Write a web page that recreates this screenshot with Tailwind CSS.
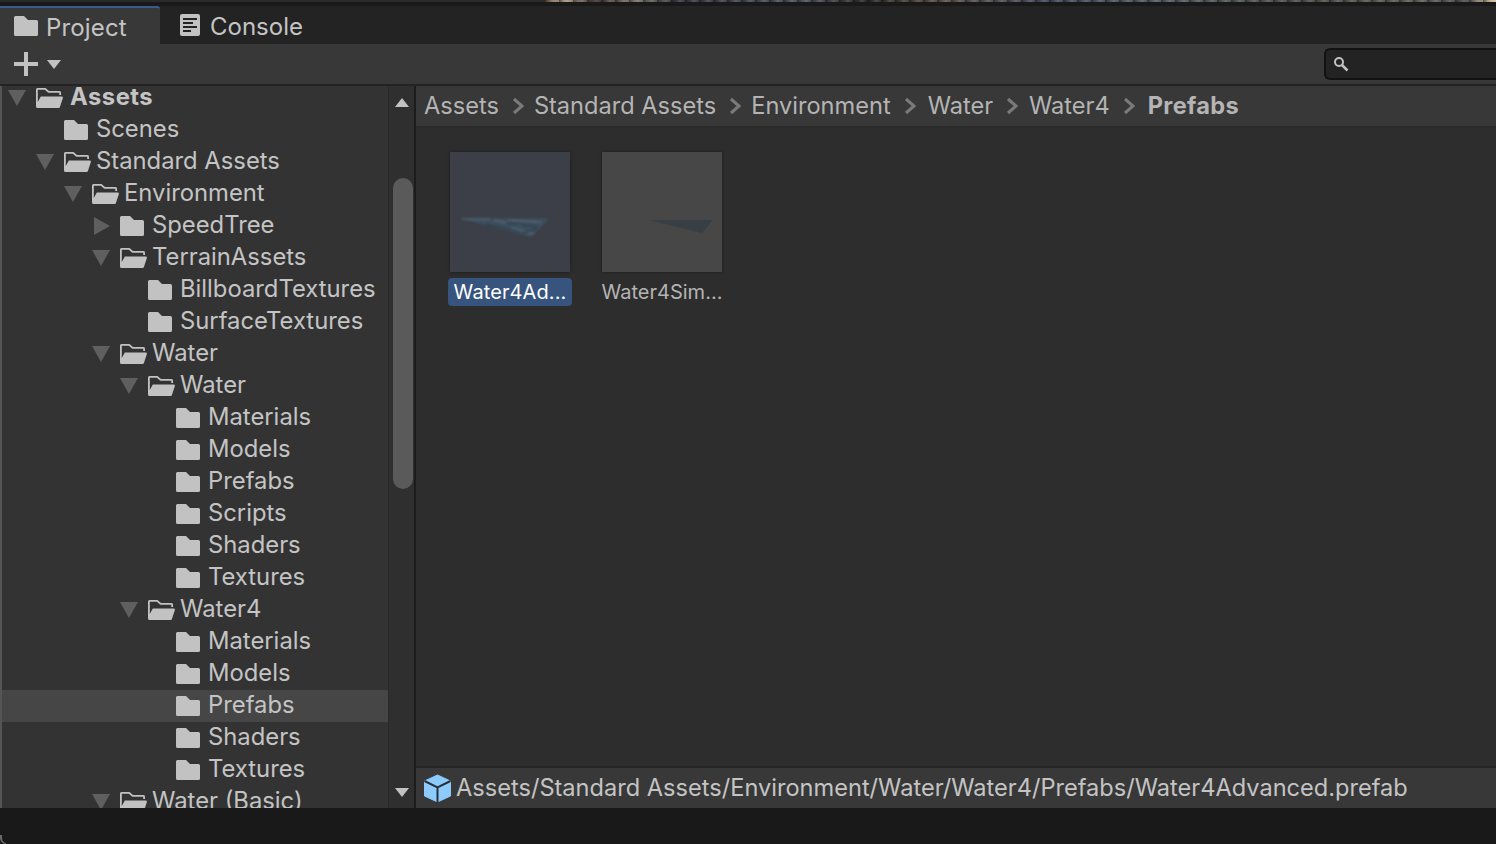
<!DOCTYPE html>
<html lang="en">
<head>
    <meta charset="UTF-8">
    <title>Project</title>
    <script src="https://cdn.jsdelivr.net/npm/@tailwindcss/browser@4"></script>
</head>
<body class="bg-[#191919] h-[844px] w-[1496px] overflow-hidden font-['Inter','Liberation_Sans',sans-serif] text-[#c4c4c4] text-[23.800px]">

    <svg class="hidden">
        <symbol id="folder" viewBox="0 0 24 20"><path fill="#c2c2c2" d="M1.500 0H10L14 4H22.500A1.500 1.500 0 0 1 24 5.500V18.500A1.500 1.500 0 0 1 22.500 20H1.500A1.500 1.500 0 0 1 0 18.500V1.500A1.500 1.500 0 0 1 1.500 0Z"/></symbol>
        <symbol id="folder-open" viewBox="0 0 27 20"><path fill="#c2c2c2" d="M1.500 0H9.500L13 3H23.500A1.500 1.500 0 0 1 25 4.500V7H23.200V4.800H12.300L8.800 1.800H1.800V14L4.800 8.500H25.500A1.300 1.300 0 0 1 26.800 10.200L24 18.800A1.500 1.500 0 0 1 22.500 20H1.500A1.500 1.500 0 0 1 0 18.500V1.500A1.500 1.500 0 0 1 1.500 0Z"/></symbol>
        <symbol id="down" viewBox="0 0 18 16"><path fill="#5f5f5f" d="M0 0H18L9 16Z"/></symbol>
    </svg>

    <!-- Bande du haut -->
    <div class="h-[2px] flex">
        <div class="w-[545px] bg-[#2a2a2a]"></div>
        <div class="flex-1 bg-[repeating-linear-gradient(90deg,#00000070_0px,#00000000_5px,#ffffff24_9px,#00000000_14px),linear-gradient(90deg,#6b5a48_0px,#a89880_20px,#3a3230_50px,#7a746c_90px,#34363c_130px,#4c505a_260px,#2a2826_320px,#59524a_400px,#43485a_500px,#555a60_620px,#4a4e48_760px,#5a5d58_880px,#474a4c_920px,#b8a68a_945px,#d8c8a8_951px)]"></div>
    </div>
    <div class="h-[4px] bg-[#191919]"></div>

    <!-- Onglets -->
    <div class="h-[38px] bg-[#232323] flex">
        <div class="w-[160px] bg-[#383838] border-t-[2px] border-[#3a5a8c] rounded-tr-[3px] flex items-center pl-[14px] gap-[8px]">
            <svg class="w-[24px] h-[20px]"><use href="#folder"/></svg>
            <span class="mt-[3px] text-[24px] tracking-[0.150px]">Project</span>
        </div>
        <div class="flex items-center pl-[20px] gap-[10px]">
            <svg class="w-[20px] h-[22px]" viewBox="0 0 20 22">
                <path fill="#c2c2c2" fill-rule="evenodd" d="M2 0H18A2 2 0 0 1 20 2V20A2 2 0 0 1 18 22H2A2 2 0 0 1 0 20V2A2 2 0 0 1 2 0ZM3 4V6H17V4ZM3 8V10H13V8ZM3 12V14H17V12ZM3 16V18H11V16Z"/>
            </svg>
            <span class="mt-[3px] text-[24px]">Console</span>
        </div>
    </div>

    <!-- Barre d'outils -->
    <div class="h-[42px] bg-[#383838] border-b-[2px] border-[#232323] flex items-center pl-[14px] pr-0">
        <svg class="w-[24px] h-[24px]" viewBox="0 0 24 24"><path fill="#c2c2c2" d="M10 0H14V10H24V14H14V24H10V14H0V10H10Z"/></svg>
        <svg class="w-[14px] h-[9px] ml-[9px]" viewBox="0 0 14 9"><path fill="#c2c2c2" d="M0 0H14L7 9Z"/></svg>
        <div class="ml-auto w-[172px] h-[32px] bg-[#232323] border-[2px] border-r-0 border-[#121212] rounded-l-[6px] flex items-center pl-[7px]">
            <svg class="w-[16px] h-[16px]" viewBox="0 0 16 16"><circle cx="6" cy="6" r="4" fill="none" stroke="#c2c2c2" stroke-width="2"/><path stroke="#c2c2c2" stroke-width="2.500" d="M9 9L14.500 14.500"/></svg>
        </div>
    </div>

    <!-- Panneaux -->
    <div class="h-[722px] flex overflow-hidden border-l-[2px] border-[#555555]">

        <!-- Arborescence -->
        <div class="w-[386px] bg-[#333333] overflow-hidden">
            <div class="mt-[-4px]">
                <div class="flex items-center h-8 pl-[6px]"><svg class="w-[18px] h-[16px] mr-[10px]"><use href="#down"/></svg><svg class="w-[27px] h-[20px] mr-[7px]"><use href="#folder-open"/></svg><span class="mb-[2px] font-bold tracking-[0.500px]">Assets</span></div>
                <div class="flex items-center h-8 pl-[62px]"><svg class="w-[24px] h-[20px] mr-[8px]"><use href="#folder"/></svg><span class="mb-[2px]">Scenes</span></div>
                <div class="flex items-center h-8 pl-[34px]"><svg class="w-[18px] h-[16px] mr-[10px]"><use href="#down"/></svg><svg class="w-[27px] h-[20px] mr-[5px]"><use href="#folder-open"/></svg><span class="mb-[2px]">Standard Assets</span></div>
                <div class="flex items-center h-8 pl-[62px]"><svg class="w-[18px] h-[16px] mr-[10px]"><use href="#down"/></svg><svg class="w-[27px] h-[20px] mr-[5px]"><use href="#folder-open"/></svg><span class="mb-[2px]">Environment</span></div>
                <div class="flex items-center h-8 pl-[92px]"><svg class="w-[16px] h-[18px] mr-[10px]" viewBox="0 0 16 18"><path fill="#5f5f5f" d="M0 0L16 9L0 18Z"/></svg><svg class="w-[24px] h-[20px] mr-[8px]"><use href="#folder"/></svg><span class="mb-[2px]">SpeedTree</span></div>
                <div class="flex items-center h-8 pl-[90px]"><svg class="w-[18px] h-[16px] mr-[10px]"><use href="#down"/></svg><svg class="w-[27px] h-[20px] mr-[5px]"><use href="#folder-open"/></svg><span class="mb-[2px]">TerrainAssets</span></div>
                <div class="flex items-center h-8 pl-[146px]"><svg class="w-[24px] h-[20px] mr-[8px]"><use href="#folder"/></svg><span class="mb-[2px]">BillboardTextures</span></div>
                <div class="flex items-center h-8 pl-[146px]"><svg class="w-[24px] h-[20px] mr-[8px]"><use href="#folder"/></svg><span class="mb-[2px]">SurfaceTextures</span></div>
                <div class="flex items-center h-8 pl-[90px]"><svg class="w-[18px] h-[16px] mr-[10px]"><use href="#down"/></svg><svg class="w-[27px] h-[20px] mr-[5px]"><use href="#folder-open"/></svg><span class="mb-[2px]">Water</span></div>
                <div class="flex items-center h-8 pl-[118px]"><svg class="w-[18px] h-[16px] mr-[10px]"><use href="#down"/></svg><svg class="w-[27px] h-[20px] mr-[5px]"><use href="#folder-open"/></svg><span class="mb-[2px]">Water</span></div>
                <div class="flex items-center h-8 pl-[174px]"><svg class="w-[24px] h-[20px] mr-[8px]"><use href="#folder"/></svg><span class="mb-[2px]">Materials</span></div>
                <div class="flex items-center h-8 pl-[174px]"><svg class="w-[24px] h-[20px] mr-[8px]"><use href="#folder"/></svg><span class="mb-[2px]">Models</span></div>
                <div class="flex items-center h-8 pl-[174px]"><svg class="w-[24px] h-[20px] mr-[8px]"><use href="#folder"/></svg><span class="mb-[2px]">Prefabs</span></div>
                <div class="flex items-center h-8 pl-[174px]"><svg class="w-[24px] h-[20px] mr-[8px]"><use href="#folder"/></svg><span class="mb-[2px]">Scripts</span></div>
                <div class="flex items-center h-8 pl-[174px]"><svg class="w-[24px] h-[20px] mr-[8px]"><use href="#folder"/></svg><span class="mb-[2px]">Shaders</span></div>
                <div class="flex items-center h-8 pl-[174px]"><svg class="w-[24px] h-[20px] mr-[8px]"><use href="#folder"/></svg><span class="mb-[2px]">Textures</span></div>
                <div class="flex items-center h-8 pl-[118px]"><svg class="w-[18px] h-[16px] mr-[10px]"><use href="#down"/></svg><svg class="w-[27px] h-[20px] mr-[5px]"><use href="#folder-open"/></svg><span class="mb-[2px]">Water4</span></div>
                <div class="flex items-center h-8 pl-[174px]"><svg class="w-[24px] h-[20px] mr-[8px]"><use href="#folder"/></svg><span class="mb-[2px]">Materials</span></div>
                <div class="flex items-center h-8 pl-[174px]"><svg class="w-[24px] h-[20px] mr-[8px]"><use href="#folder"/></svg><span class="mb-[2px]">Models</span></div>
                <div class="flex items-center h-8 pl-[174px] bg-[#464646]"><svg class="w-[24px] h-[20px] mr-[8px]"><use href="#folder"/></svg><span class="mb-[2px]">Prefabs</span></div>
                <div class="flex items-center h-8 pl-[174px]"><svg class="w-[24px] h-[20px] mr-[8px]"><use href="#folder"/></svg><span class="mb-[2px]">Shaders</span></div>
                <div class="flex items-center h-8 pl-[174px]"><svg class="w-[24px] h-[20px] mr-[8px]"><use href="#folder"/></svg><span class="mb-[2px]">Textures</span></div>
                <div class="flex items-center h-8 pl-[90px]"><svg class="w-[18px] h-[16px] mr-[10px]"><use href="#down"/></svg><svg class="w-[27px] h-[20px] mr-[5px]"><use href="#folder-open"/></svg><span class="mb-[2px]">Water (Basic)</span></div>
            </div>
        </div>

        <!-- Ascenseur -->
        <div class="w-[26px] bg-[#2f2f2f] border-l-[1px] border-[#2a2a2a] pl-[2px] flex flex-col items-center">
            <svg class="w-[14px] h-[9px] mt-[12px] mr-[2px]" viewBox="0 0 14 9"><path fill="#c2c2c2" d="M7 0L14 9H0Z"/></svg>
            <div class="w-[20px] h-[311px] mt-[71px] bg-[#5a5a5a] rounded-[10px]"></div>
            <svg class="w-[14px] h-[9px] mt-auto mb-[11px] mr-[2px]" viewBox="0 0 14 9"><path fill="#c2c2c2" d="M0 0H14L7 9Z"/></svg>
        </div>
        <div class="w-[2px] bg-[#1c1c1c]"></div>

        <!-- Panneau droit -->
        <div class="flex-1 flex flex-col">
            <div class="h-[42px] bg-[#383838] border-b-[2px] border-[#2a2a2a] flex items-center pl-[8px] text-[23.600px] text-[#b4b4b4]">
                <span>Assets</span>
                <svg class="w-[12px] h-[18px] ml-[13px] mr-[10px]" viewBox="0 0 12 18"><path fill="none" stroke="#7a7a7a" stroke-width="3" d="M2 2L10 9L2 16"/></svg>
                <span>Standard Assets</span>
                <svg class="w-[12px] h-[18px] ml-[13px] mr-[10px]" viewBox="0 0 12 18"><path fill="none" stroke="#7a7a7a" stroke-width="3" d="M2 2L10 9L2 16"/></svg>
                <span>Environment</span>
                <svg class="w-[12px] h-[18px] ml-[13px] mr-[12px]" viewBox="0 0 12 18"><path fill="none" stroke="#7a7a7a" stroke-width="3" d="M2 2L10 9L2 16"/></svg>
                <span>Water</span>
                <svg class="w-[12px] h-[18px] ml-[13px] mr-[11px]" viewBox="0 0 12 18"><path fill="none" stroke="#7a7a7a" stroke-width="3" d="M2 2L10 9L2 16"/></svg>
                <span>Water4</span>
                <svg class="w-[12px] h-[18px] ml-[13px] mr-[13px]" viewBox="0 0 12 18"><path fill="none" stroke="#7a7a7a" stroke-width="3" d="M2 2L10 9L2 16"/></svg>
                <span class="font-bold tracking-[0.300px]">Prefabs</span>
            </div>

            <div class="flex-1 bg-[#2d2d2d] flex gap-[28px] pl-[32px] pt-[24px] border-b-[2px] border-[#252525]">
                <div class="w-[124px] flex flex-col items-center">
                    <svg class="w-[120px] h-[120px] shadow-[0_0_3px_#1c1c1c]" viewBox="0 0 120 120">
                        <defs><filter id="soft"><feGaussianBlur stdDeviation="0.900"/></filter></defs>
                        <rect width="120" height="120" fill="#3c3f47"/>
                        <g filter="url(#soft)">
                            <path fill="#3d505e" d="M10 66.500H99L81 85Z"/>
                            <path fill="none" stroke="#566d7c" stroke-width="1.200" d="M12 67H40M44 68L72 74M58 68L92 70M62 76L84 82"/>
                            <path fill="none" stroke="#2f3e4a" stroke-width="1.400" d="M36 72L70 80M56 71L88 75M72 81L86 77"/>
                        </g>
                    </svg>
                    <div class="mt-[6px] w-[124px] h-[28px] bg-[#37547f] rounded-[4px] flex items-center justify-center text-[20px] tracking-[0.100px] text-white">Water4Ad...</div>
                </div>
                <div class="w-[124px] flex flex-col items-center">
                    <svg class="w-[120px] h-[120px] shadow-[0_0_3px_#1c1c1c]" viewBox="0 0 120 120">
                        <rect width="120" height="120" fill="#474747"/>
                        <path fill="#383f44" d="M47 68H111L100 81Z"/>
                    </svg>
                    <div class="mt-[6px] h-[28px] flex items-center justify-center text-[20px] text-[#b4b4b4]">Water4Sim...</div>
                </div>
            </div>

            <div class="h-[40px] bg-[#383838] flex items-center pl-[8px]">
                <svg class="w-[27px] h-[29px]" viewBox="0 0 27 29">
                    <path fill="#8ccaff" stroke="#8ccaff" stroke-linejoin="round" d="M13.500 1L26.500 7V22L13.500 28L0.500 22V7Z"/>
                    <path fill="none" stroke="#2a2f36" stroke-width="2" d="M0.500 7L13.500 13.500L26.500 7M13.500 13.500V29"/>
                </svg>
                <span class="ml-[5px] text-[23.600px] text-[#c4c4c4]">Assets/Standard Assets/Environment/Water/Water4/Prefabs/Water4Advanced.prefab</span>
            </div>
        </div>
    </div>

    <!-- Bas de fenêtre -->
    <div class="h-[36px] flex items-end">
        <div class="w-[6px] h-[9px] border-l-[2px] border-b-[1px] border-[#6a6a6a] rounded-bl-[6px]"></div>
    </div>
</body>
</html>
